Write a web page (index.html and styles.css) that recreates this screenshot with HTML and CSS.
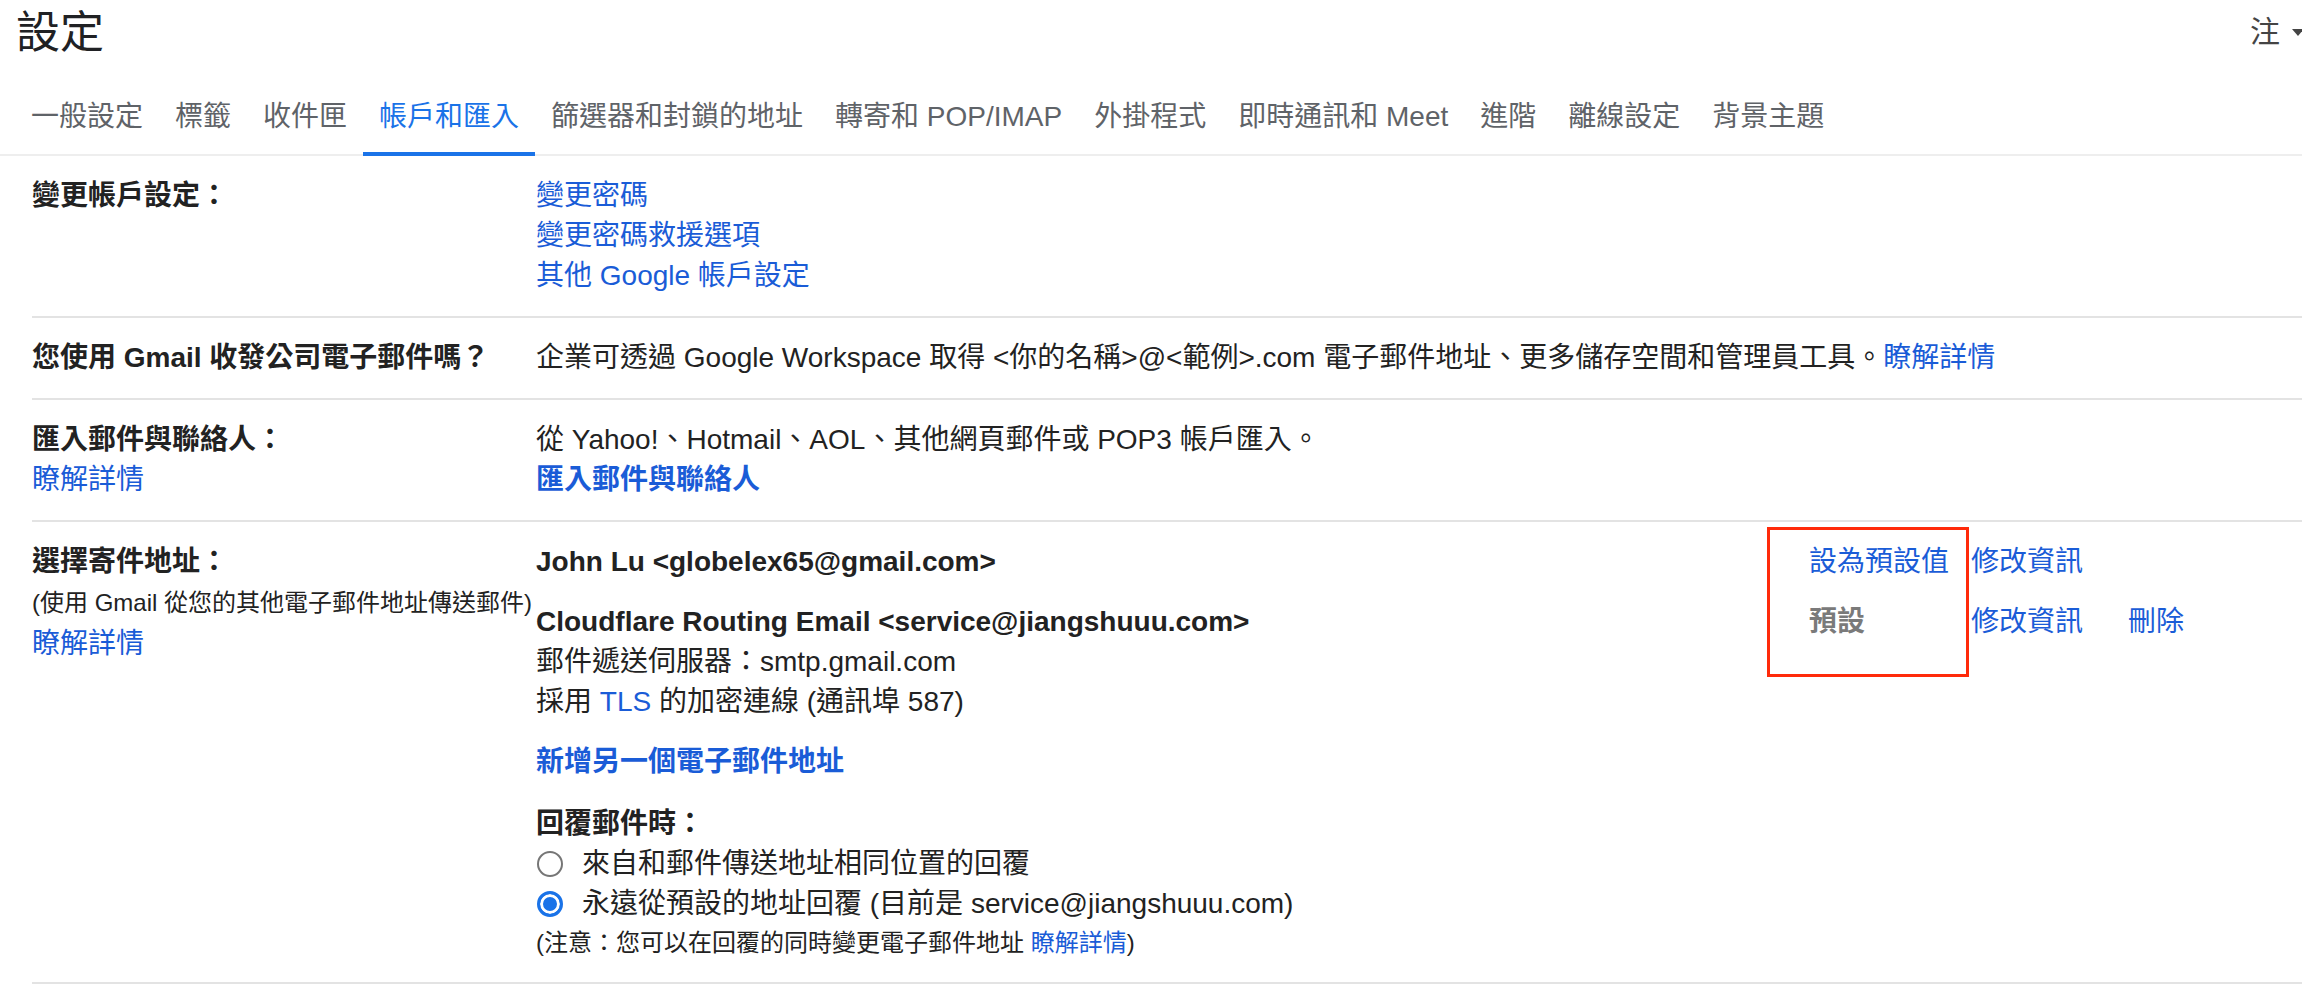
FILE: index.html
```html
<!DOCTYPE html>
<html lang="zh-Hant">
<head>
<meta charset="utf-8">
<title>設定</title>
<link rel="stylesheet" href="styles.css">
</head>
<body>
<div class="page">
  <header class="top">
    <h1 class="title">設定</h1>
    <div class="ime">注<svg class="caret" width="12" height="7" viewBox="0 0 12 7"><path d="M0 0h12L6 7z" fill="#444"/></svg></div>
  </header>

  <nav class="tabs">
    <a class="tab">一般設定</a>
    <a class="tab">標籤</a>
    <a class="tab">收件匣</a>
    <a class="tab active">帳戶和匯入</a>
    <a class="tab">篩選器和封鎖的地址</a>
    <a class="tab">轉寄和 POP/IMAP</a>
    <a class="tab">外掛程式</a>
    <a class="tab">即時通訊和 Meet</a>
    <a class="tab">進階</a>
    <a class="tab">離線設定</a>
    <a class="tab">背景主題</a>
  </nav>

  <div class="settings">
    <section class="row">
      <div class="label"><div class="label-title">變更帳戶設定：</div></div>
      <div class="value">
        <div><a class="link">變更密碼</a></div>
        <div><a class="link">變更密碼救援選項</a></div>
        <div><a class="link">其他 Google 帳戶設定</a></div>
      </div>
    </section>

    <section class="row">
      <div class="label"><div class="label-title">您使用 Gmail 收發公司電子郵件嗎？</div></div>
      <div class="value">
        <div>企業可透過 Google Workspace 取得 &lt;你的名稱&gt;@&lt;範例&gt;.com 電子郵件地址、更多儲存空間和管理員工具。<a class="link">瞭解詳情</a></div>
      </div>
    </section>

    <section class="row">
      <div class="label">
        <div class="label-title">匯入郵件與聯絡人：</div>
        <div><a class="link">瞭解詳情</a></div>
      </div>
      <div class="value">
        <div>從 Yahoo!、Hotmail、AOL、其他網頁郵件或 POP3 帳戶匯入。</div>
        <div><a class="link strong">匯入郵件與聯絡人</a></div>
      </div>
    </section>

    <section class="row row-send">
      <div class="label">
        <div class="label-title">選擇寄件地址：</div>
        <div class="label-sub">(使用 Gmail 從您的其他電子郵件地址傳送郵件)</div>
        <div><a class="link">瞭解詳情</a></div>
      </div>
      <div class="value">
        <div class="addr-row first">
          <div class="addr"><b>John Lu &lt;globelex65@gmail.com&gt;</b></div>
          <div class="act"><a class="link">設為預設值</a></div>
          <div class="act"><a class="link">修改資訊</a></div>
          <div class="act"></div>
        </div>
        <div class="addr-row">
          <div class="addr">
            <div><b>Cloudflare Routing Email &lt;service@jiangshuuu.com&gt;</b></div>
            <div>郵件遞送伺服器：smtp.gmail.com</div>
            <div>採用 <a class="link">TLS</a> 的加密連線 (通訊埠 587)</div>
          </div>
          <div class="act"><span class="default">預設</span></div>
          <div class="act"><a class="link">修改資訊</a></div>
          <div class="act"><a class="link">刪除</a></div>
        </div>
        <div class="add-addr"><a class="link strong">新增另一個電子郵件地址</a></div>
        <div class="reply">
          <div class="reply-title">回覆郵件時：</div>
          <label class="radio-line"><span class="radio"></span>來自和郵件傳送地址相同位置的回覆</label>
          <label class="radio-line"><span class="radio checked"></span>永遠從預設的地址回覆 (目前是 service@jiangshuuu.com)</label>
          <div class="note">(注意：您可以在回覆的同時變更電子郵件地址 <a class="link">瞭解詳情</a>)</div>
        </div>
      </div>
      <div class="annot"></div>
    </section>
  </div>
</div>
</body>
</html>
```

FILE: styles.css
```css
html, body {
  margin: 0;
  padding: 0;
  background: #ffffff;
}

body {
  overflow: hidden;
  font-family: "Liberation Sans", Arial, "Noto Sans CJK TC", sans-serif;
  font-size: 28px;
  line-height: 40px;
  color: #222222;
}

.page {
  width: 2302px;
}

.top {
  display: flex;
  justify-content: space-between;
  align-items: flex-start;
  height: 62px;
  padding-left: 16px;
}

.title {
  margin: 0;
  padding-top: 4px;
  font-size: 44px;
  font-weight: 400;
  line-height: 58px;
  color: #202124;
}

.ime {
  display: flex;
  align-items: center;
  gap: 12px;
  margin-right: -2px;
  padding-top: 12px;
  font-size: 30px;
  line-height: 40px;
  color: #444444;
}

.caret {
  display: block;
}

.tabs {
  display: flex;
  padding-left: 15px;
  border-bottom: 2px solid #eeeeee;
}

.tab {
  padding: 35px 16px 19px;
  margin-bottom: -2px;
  color: #5f6368;
  white-space: nowrap;
}

.tab.active {
  color: #1a73e8;
  box-shadow: inset 0 -4px 0 #1a73e8;
}

.settings {
  margin-left: 32px;
}

.row {
  position: relative;
  display: flex;
  padding: 20px 0;
  border-bottom: 2px solid #e3e3e3;
}

.label {
  flex: none;
  width: 504px;
}

.label-title {
  font-weight: 700;
}

.label-sub {
  font-size: 24px;
  line-height: 42px;
  white-space: nowrap;
}

.value {
  flex: 1;
  min-width: 0;
}

.link {
  color: #1a5cd7;
  cursor: pointer;
}

.link.strong {
  font-weight: 700;
}

.addr-row {
  display: grid;
  grid-template-columns: 1273px 162px 157px 1fr;
}

.addr-row.first {
  margin-bottom: 20px;
}

.default {
  color: #7a7a7a;
  font-weight: 700;
}

.add-addr {
  margin-top: 20px;
}

.reply {
  margin-top: 22px;
}

.reply-title {
  font-weight: 700;
}

.radio-line {
  display: flex;
  align-items: center;
  height: 40px;
}

.radio {
  flex: none;
  box-sizing: border-box;
  width: 26px;
  height: 26px;
  margin: 0 19px 0 1px;
  border: 2px solid #767676;
  border-radius: 50%;
  background: #ffffff;
}

.radio.checked {
  border: 3px solid #1a73e8;
  box-shadow: inset 0 0 0 3px #ffffff;
  background: #1a73e8;
}

.note {
  font-size: 24px;
  line-height: 38px;
}

.annot {
  position: absolute;
  left: 1735px;
  top: 5px;
  width: 202px;
  height: 150px;
  box-sizing: border-box;
  border: 3px solid #ff2a0a;
  pointer-events: none;
}
```
